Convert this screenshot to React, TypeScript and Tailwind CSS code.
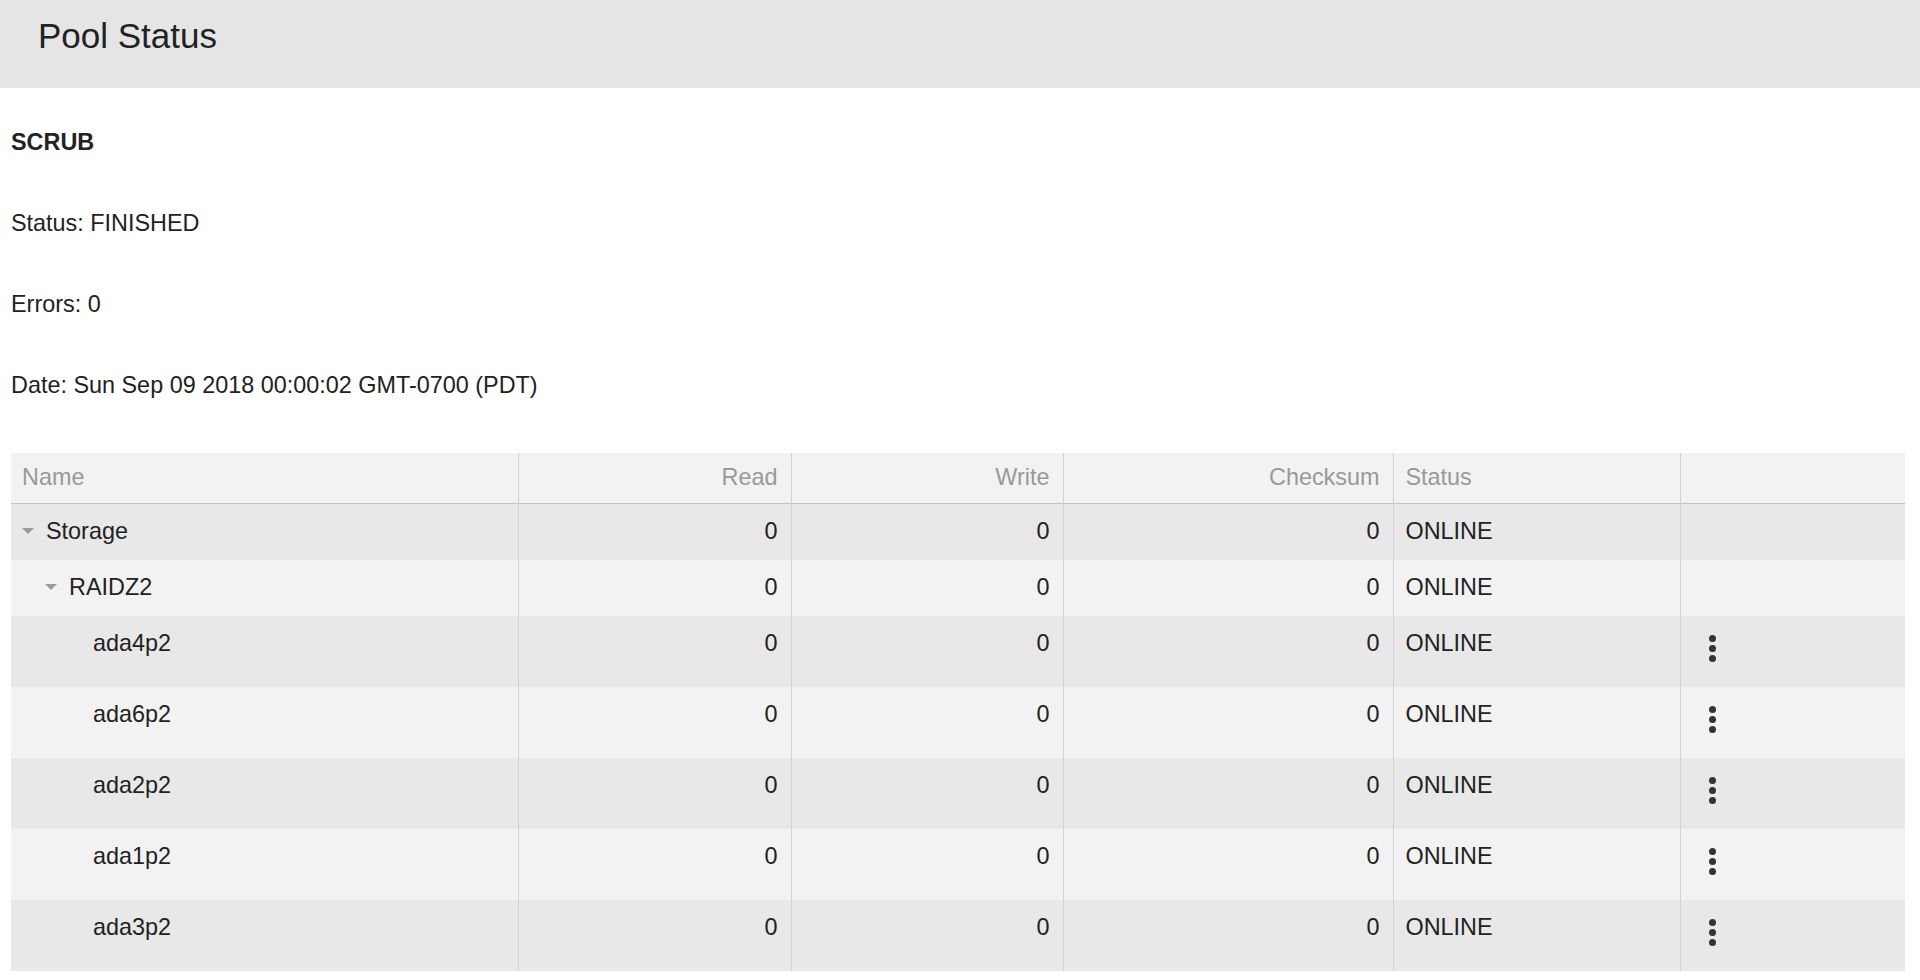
import React from "react";

type Row = {
  name: string;
  level: number;
  expandable?: boolean;
  disk?: boolean;
};

const rows: Row[] = [
  { name: "Storage", level: 0, expandable: true },
  { name: "RAIDZ2", level: 1, expandable: true },
  { name: "ada4p2", level: 2, disk: true },
  { name: "ada6p2", level: 2, disk: true },
  { name: "ada2p2", level: 2, disk: true },
  { name: "ada1p2", level: 2, disk: true },
  { name: "ada3p2", level: 2, disk: true },
];

const indents = ["pl-[11px]", "pl-[34px]", "pl-[82px]"];

function Caret() {
  return (
    <svg width="12" height="7" viewBox="0 0 12 7" className="mr-[12px] shrink-0">
      <path d="M0 0 L12 0 L6 6 Z" fill="#9a9a9a" />
    </svg>
  );
}

function DotsButton() {
  return (
    <button className="flex h-[40px] w-[40px] flex-col items-center justify-center gap-[3px]">
      <span className="h-[7px] w-[7px] rounded-full bg-[#333]" />
      <span className="h-[7px] w-[7px] rounded-full bg-[#333]" />
      <span className="h-[7px] w-[7px] rounded-full bg-[#333]" />
    </button>
  );
}

export default function App() {
  return (
    <div className="min-h-screen bg-white text-[#222] font-['Liberation_Sans',Arial,sans-serif]">
      <div className="flex h-[88px] items-center bg-[#e5e5e5] pl-[38px]">
        <h1 className="text-[35px] leading-none pb-[17px]">Pool Status</h1>
      </div>

      <div className="pl-[11px] pr-[15px]">
        <div className="flex flex-col gap-[54px] pt-[41px] text-[23.4px] leading-[27px]">
          <div className="font-bold">SCRUB</div>
          <div>Status: FINISHED</div>
          <div>Errors: 0</div>
          <div>Date: Sun Sep 09 2018 00:00:02 GMT-0700 (PDT)</div>
        </div>

        <table className="mt-[54px] w-[1894px] table-fixed border-collapse text-[23.4px] leading-[27px]">
          <colgroup>
            <col className="w-[507px]" />
            <col className="w-[273px]" />
            <col className="w-[272px]" />
            <col className="w-[330px]" />
            <col className="w-[287px]" />
            <col className="w-[225px]" />
          </colgroup>
          <thead>
            <tr className="h-[50px] bg-[#f2f2f2] text-[#999] border-b border-[#c4c4c4]">
              <th className="px-[11px] text-left font-normal">Name</th>
              <th className="border-l border-[#d2d2d2] px-[13px] text-right font-normal">Read</th>
              <th className="border-l border-[#d2d2d2] px-[13px] text-right font-normal">Write</th>
              <th className="border-l border-[#d2d2d2] px-[13px] text-right font-normal">Checksum</th>
              <th className="border-l border-[#d2d2d2] px-[12px] text-left font-normal">Status</th>
              <th className="border-l border-[#d2d2d2]" />
            </tr>
          </thead>
          <tbody>
            {rows.map((r, i) => (
              <tr
                key={r.name}
                className={
                  (i % 2 === 0 ? "bg-[#e8e8e8] " : "bg-[#f2f2f2] ") +
                  (r.disk ? "h-[71px]" : "h-[56px]")
                }
              >
                <td className={"align-top pt-[14px] pb-[15px] " + indents[r.level]}>
                  <div className="flex items-center">
                    {r.expandable && <Caret />}
                    <span>{r.name}</span>
                  </div>
                </td>
                <td className="align-top border-l border-[#d2d2d2] pt-[14px] pb-[15px] px-[13px] text-right">0</td>
                <td className="align-top border-l border-[#d2d2d2] pt-[14px] pb-[15px] px-[13px] text-right">0</td>
                <td className="align-top border-l border-[#d2d2d2] pt-[14px] pb-[15px] px-[13px] text-right">0</td>
                <td className="align-top border-l border-[#d2d2d2] pt-[14px] pb-[15px] px-[12px]">ONLINE</td>
                <td className="align-top border-l border-[#d2d2d2] pt-[13px] pl-[12px]">
                  {r.disk && <DotsButton />}
                </td>
              </tr>
            ))}
          </tbody>
        </table>
      </div>
    </div>
  );
}
